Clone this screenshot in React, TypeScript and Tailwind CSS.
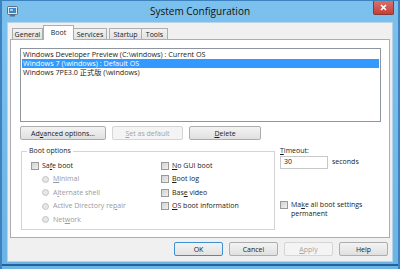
import React from 'react';
import clsx from 'clsx';

const font = "font-['Open_Sans','Liberation_Sans',sans-serif]";

function Btn({
  children,
  className,
  disabled,
  primary,
}: {
  children: React.ReactNode;
  className?: string;
  disabled?: boolean;
  primary?: boolean;
}) {
  return (
    <div
      className={clsx(
        'flex h-[14px] items-center justify-center rounded-[2px] border text-[7px] leading-none',
        disabled
          ? 'border-[#d5d5d5] bg-[#f4f4f4] text-[#a3a3a3]'
          : primary
            ? 'border-[#3f8fd0] bg-linear-to-b from-[#f3f3f3] to-[#e2e2e2] text-[#1a1a1a]'
            : 'border-[#adadad] bg-linear-to-b from-[#f3f3f3] to-[#e0e0e0] text-[#1a1a1a]',
        className,
      )}
    >
      {children}
    </div>
  );
}

function Check({ children, className }: { children: React.ReactNode; className?: string }) {
  return (
    <div className={clsx('flex h-[13.5px] items-center gap-[3px] text-[7px] text-[#1a1a1a]', className)}>
      <span className="h-[8px] w-[8px] shrink-0 border border-[#9a9a9a] bg-linear-to-br from-[#d2d2d2] to-[#f0f0f0]" />
      <span>{children}</span>
    </div>
  );
}

function Radio({ children }: { children: React.ReactNode }) {
  return (
    <div className="flex h-[13.5px] items-center gap-[4px] pl-[11px] text-[7px] text-[#9a9a9a]">
      <span className="h-[7px] w-[7px] shrink-0 rounded-full border border-[#c4c4c4] bg-[#e6e6e6]" />
      <span>{children}</span>
    </div>
  );
}

export default function App() {
  return (
    <div
      className={clsx(
        'flex h-[269px] w-[400px] flex-col overflow-hidden border-x-2 border-t border-[#3b82bf] bg-linear-to-b from-[#7cc0ee] to-[#6cb3e6]',
        font,
      )}
    >
      {/* title bar */}
      <div className="grid h-[21px] shrink-0 grid-cols-[1fr_auto_1fr] items-start">
        <div className="pl-[5px] pt-[5px]">
          <svg width="11" height="11" viewBox="0 0 11 11">
            <rect x="0.5" y="0.5" width="10" height="8" rx="1" fill="#dfe8f0" stroke="#5b6f82" />
            <rect x="2" y="2" width="7" height="5" fill="#3f86c8" />
            <rect x="3" y="3" width="3" height="2" fill="#9fd0f4" />
            <rect x="3" y="9" width="5" height="1.5" fill="#5b6f82" />
          </svg>
        </div>
        <div className="pt-[4px] text-[10px] leading-[13px] text-[#111]">System Configuration</div>
        <div className="flex justify-end pr-[4px]">
          <div className="flex h-[14px] w-[21px] items-center justify-center rounded-b-[2px] border border-t-0 border-[#8a3a36] bg-linear-to-b from-[#d9716b] to-[#c2403a]">
            <svg width="7" height="7" viewBox="0 0 7 7">
              <path d="M1 1 L6 6 M6 1 L1 6" stroke="white" strokeWidth="1.6" />
            </svg>
          </div>
        </div>
      </div>

      {/* dialog body */}
      <div className="mx-[5px] flex h-[240px] shrink-0 flex-col border border-[#b6d3ea] bg-[#f0f0f0]">
        {/* tabs */}
        <div className="mt-[2px] flex h-[14px] items-end pl-[4px] text-[7px] leading-none text-[#1a1a1a]">
          <div className="flex h-[11px] w-[31px] items-center justify-center border border-b-0 border-[#adadad] bg-linear-to-b from-[#f2f2f2] to-[#e3e3e3]">
            General
          </div>
          <div className="relative z-10 -mb-px flex h-[15px] w-[31px] items-start justify-center border border-b-0 border-[#adadad] bg-white pt-[3px]">
            Boot
          </div>
          <div className="flex h-[11px] w-[33px] items-center justify-center border border-b-0 border-l-0 border-[#adadad] bg-linear-to-b from-[#f2f2f2] to-[#e3e3e3]">
            Services
          </div>
          <div className="ml-[2px] flex h-[11px] w-[33px] items-center justify-center border border-b-0 border-[#adadad] bg-linear-to-b from-[#f2f2f2] to-[#e3e3e3]">
            Startup
          </div>
          <div className="flex h-[11px] w-[26px] items-center justify-center border border-b-0 border-l-0 border-[#adadad] bg-linear-to-b from-[#f2f2f2] to-[#e3e3e3]">
            Tools
          </div>
        </div>

        {/* tab panel */}
        <div className="mx-[2px] flex h-[199px] flex-col border border-[#adadad] bg-white">
          {/* boot list */}
          <div className="ml-[9px] mt-[8px] h-[74px] w-[361px] border border-[#8e959c] bg-white p-px pt-[1px] text-[7.2px] leading-[9px] text-[#1a1a1a]">
            <div className="h-[9px] px-px">Windows Developer Preview (C:\windows) : Current OS</div>
            <div className="h-[9px] bg-[#3399ff] px-px text-white">Windows 7 (\windows) : Default OS</div>
            <div className="h-[9px] px-px font-['Open_Sans','Noto_Sans_CJK_SC',sans-serif]">
              Windows 7PE3.0 正式版 (\windows)
            </div>
          </div>

          {/* list buttons */}
          <div className="ml-[9px] mt-[4px] flex gap-[6px]">
            <Btn className="w-[86px]">
              Ad<u>v</u>anced options...
            </Btn>
            <Btn className="w-[71px]" disabled>
              <u>S</u>et as default
            </Btn>
            <Btn className="w-[72px]">
              <u>D</u>elete
            </Btn>
          </div>

          {/* options area */}
          <div className="mt-[6px] flex">
            <fieldset className="ml-[10px] h-[84px] w-[254px] border border-[#d5d5d5] px-[9px] pb-0 pt-0">
              <legend className="ml-[-4px] px-[2px] text-[7px] leading-[10px] text-[#1a1a1a]">Boot options</legend>
              <div className="mt-[3px] grid grid-cols-[130px_1fr]">
                <div className="flex flex-col">
                  <Check>
                    Sa<u>f</u>e boot
                  </Check>
                  <Radio>
                    <u>M</u>inimal
                  </Radio>
                  <Radio>
                    A<u>l</u>ternate shell
                  </Radio>
                  <Radio>
                    Active Directory re<u>p</u>air
                  </Radio>
                  <Radio>
                    Net<u>w</u>ork
                  </Radio>
                </div>
                <div className="flex flex-col">
                  <Check>
                    <u>N</u>o GUI boot
                  </Check>
                  <Check>
                    <u>B</u>oot log
                  </Check>
                  <Check>
                    Bas<u>e</u> video
                  </Check>
                  <Check>
                    <u>O</u>S boot information
                  </Check>
                </div>
              </div>
            </fieldset>

            <div className="ml-[5px] flex flex-col text-[7px] text-[#1a1a1a]">
              <div className="h-[10px] leading-[10px]">
                <u>T</u>imeout:
              </div>
              <div className="flex items-center gap-[4px]">
                <div className="flex h-[13px] w-[48px] items-center border border-[#c8c8c8] bg-white pl-[3px]">30</div>
                <span>seconds</span>
              </div>
              <div className="mt-[31px] flex items-start gap-[3px]">
                <span className="mt-[1px] h-[8px] w-[8px] shrink-0 border border-[#9a9a9a] bg-linear-to-br from-[#d2d2d2] to-[#f0f0f0]" />
                <span className="leading-[9px]">
                  Ma<u>k</u>e all boot settings
                  <br />
                  permanent
                </span>
              </div>
            </div>
          </div>
        </div>

        {/* dialog buttons */}
        <div className="mt-[4px] flex justify-end gap-[6px] pr-[4px]">
          <Btn className="w-[49px]" primary>
            OK
          </Btn>
          <Btn className="w-[49px]">Cancel</Btn>
          <Btn className="w-[49px]" disabled>
            <u>A</u>pply
          </Btn>
          <Btn className="w-[49px]">Help</Btn>
        </div>
      </div>

      {/* bottom frame */}
      <div className="mt-[2px] h-[2px] shrink-0 bg-[#23629a]" />
    </div>
  );
}
